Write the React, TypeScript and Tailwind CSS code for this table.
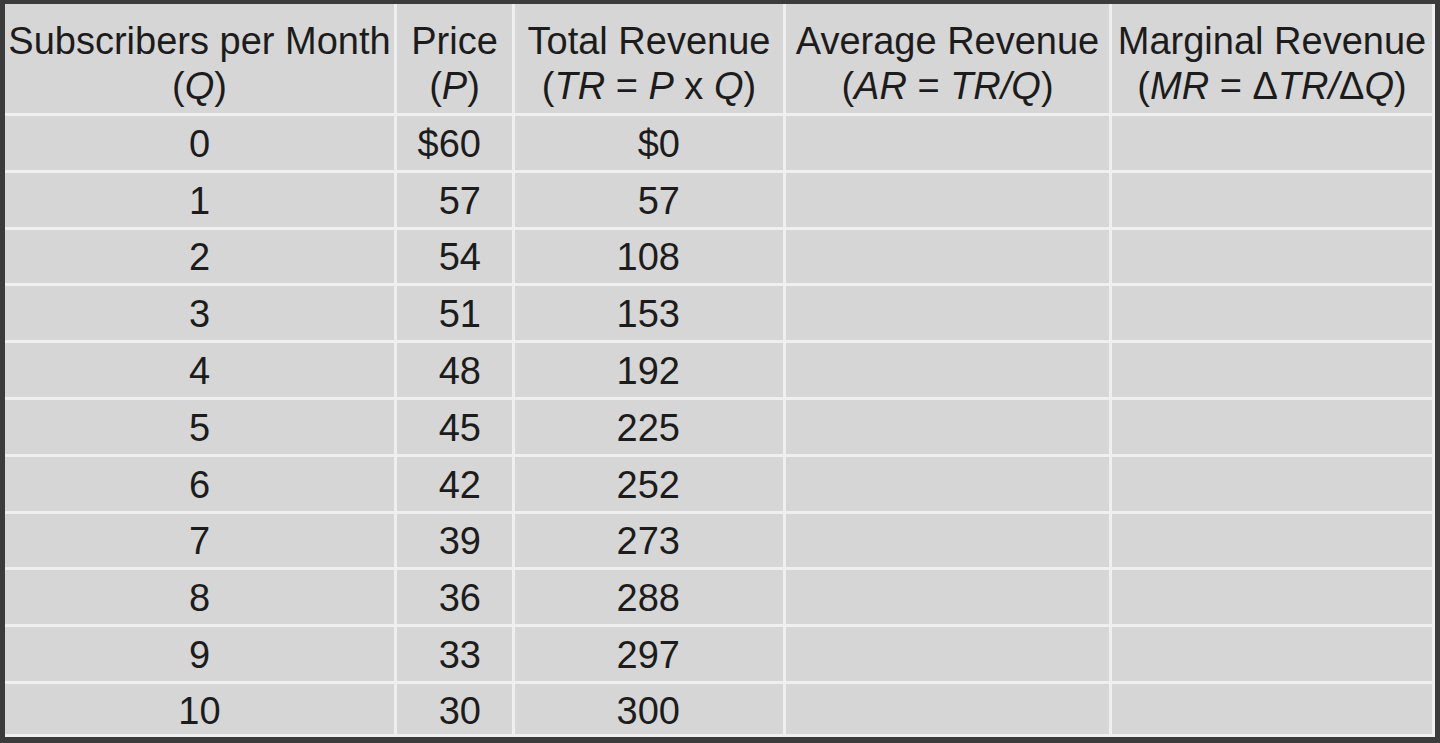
import React from 'react';

const rows: [string, string, string][] = [
  ['0', '$60', '$0'],
  ['1', '57', '57'],
  ['2', '54', '108'],
  ['3', '51', '153'],
  ['4', '48', '192'],
  ['5', '45', '225'],
  ['6', '42', '252'],
  ['7', '39', '273'],
  ['8', '36', '288'],
  ['9', '33', '297'],
  ['10', '30', '300'],
];

const HeaderCell = ({ top, bottom }: { top: string; bottom: React.ReactNode }) => (
  <div className="bg-[#d6d6d6] flex flex-col items-center pt-[15px] leading-[45px] whitespace-nowrap">
    <span>{top}</span>
    <span>{bottom}</span>
  </div>
);

export default function App() {
  return (
    <div
      className="w-[1440px] h-[743px] bg-[#efefef] border-t-4 border-l-[5px] border-r-[5px] border-b-[6px] border-[#3b3b3b] pr-[3px] pb-[3px] text-[38px] text-[#1c1c1c] overflow-hidden"
      style={{ fontFamily: '"Liberation Sans", Arial, Helvetica, sans-serif' }}
    >
      <div className="grid h-full grid-cols-[389px_115px_268px_323px_1fr] grid-rows-[109px_repeat(10,53.8px)_1fr] gap-[3px]">
        {/* Header */}
        <HeaderCell top="Subscribers per Month" bottom={<>(<i>Q</i>)</>} />
        <HeaderCell top="Price" bottom={<>(<i>P</i>)</>} />
        <HeaderCell top="Total Revenue" bottom={<>(<i>TR</i> = <i>P</i> x <i>Q</i>)</>} />
        <HeaderCell top="Average Revenue" bottom={<>(<i>AR</i> = <i>TR/Q</i>)</>} />
        <HeaderCell top="Marginal Revenue" bottom={<>(<i>MR</i> = Δ<i>TR/</i>Δ<i>Q</i>)</>} />

        {/* Body */}
        {rows.map(([q, p, tr], i) => (
          <React.Fragment key={q}>
            <div className={`bg-[#d6d6d6] flex items-center justify-center leading-none ${i === 10 ? 'pt-[5px]' : 'pt-[2px]'}`}>{q}</div>
            <div className={`bg-[#d6d6d6] flex items-center justify-end pr-[31px] leading-none ${i === 10 ? 'pt-[5px]' : 'pt-[2px]'}`}>{p}</div>
            <div className={`bg-[#d6d6d6] flex items-center justify-end pr-[103px] leading-none ${i === 10 ? 'pt-[5px]' : 'pt-[2px]'}`}>{tr}</div>
            <div className="bg-[#d6d6d6]" />
            <div className="bg-[#d6d6d6]" />
          </React.Fragment>
        ))}
      </div>
    </div>
  );
}
